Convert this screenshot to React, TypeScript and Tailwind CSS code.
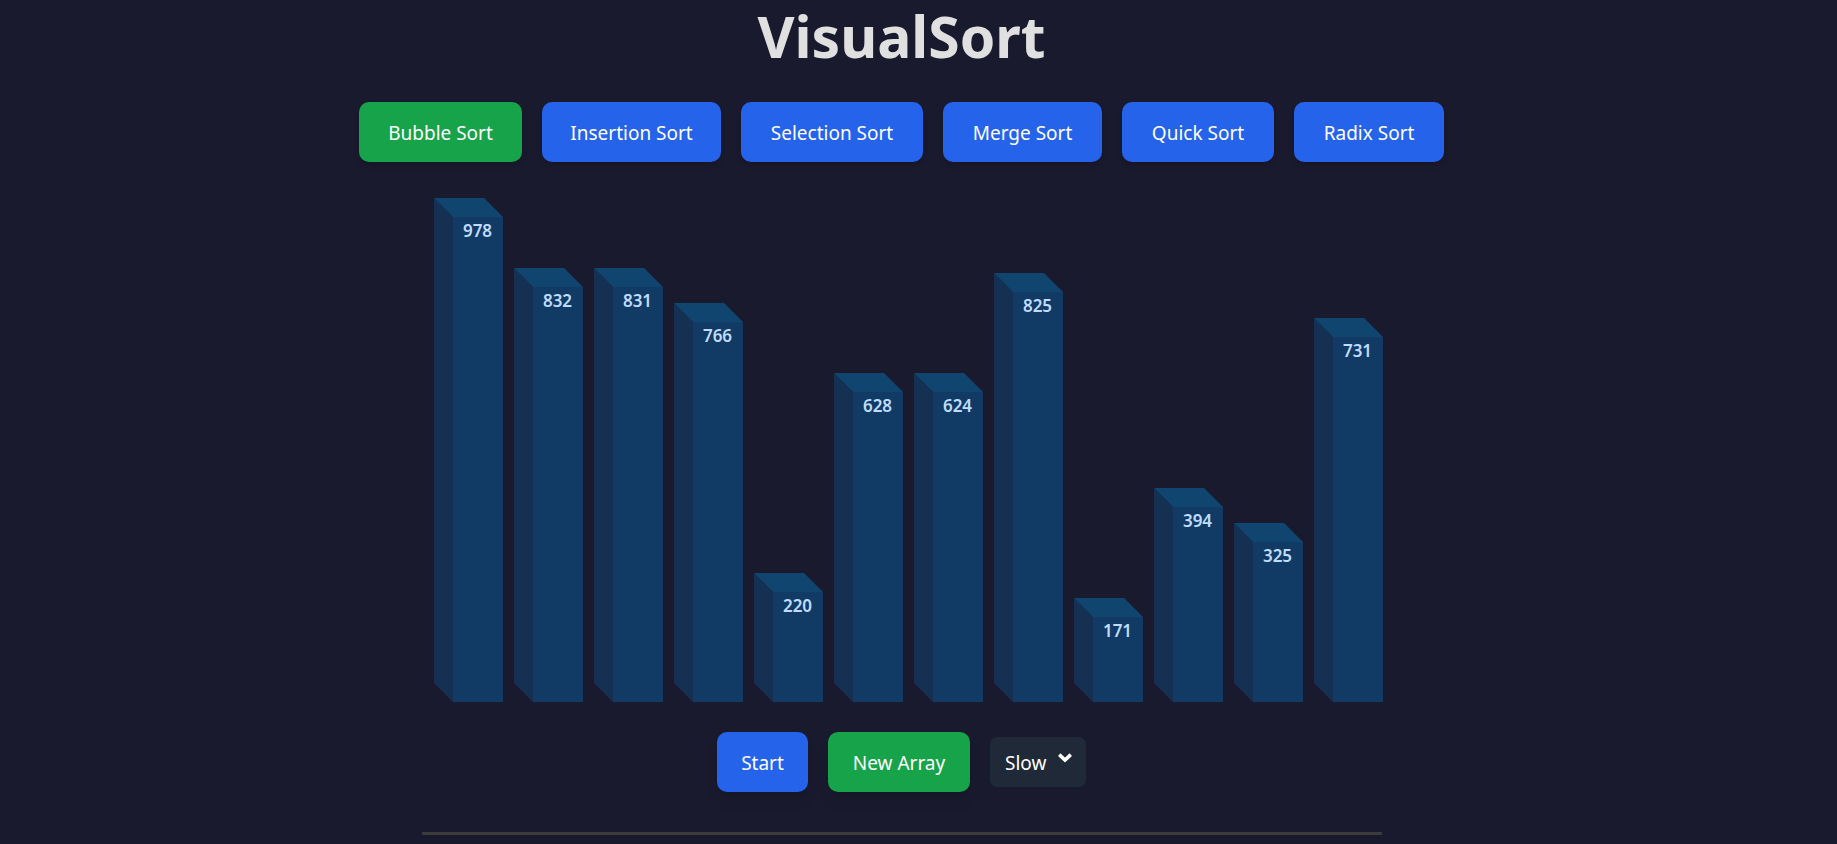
import { useState } from "react";

const algorithms = [
  { name: "Bubble Sort", width: "w-[163px]" },
  { name: "Insertion Sort", width: "w-[179px]" },
  { name: "Selection Sort", width: "w-[182px]" },
  { name: "Merge Sort", width: "w-[159px]" },
  { name: "Quick Sort", width: "w-[152px]" },
  { name: "Radix Sort", width: "w-[150px]" },
];

const initialValues = [978, 832, 831, 766, 220, 628, 624, 825, 171, 394, 325, 731];

const DEPTH = 19;
const FACE = 50;

function Bar({ value }: { value: number }) {
  const height = Math.floor(value / 10) * 5;
  const total = height + DEPTH;
  return (
    <li className="grid">
      <svg
        className="col-start-1 row-start-1 block"
        width={FACE + DEPTH}
        height={total}
        aria-hidden="true"
      >
        <polygon
          className="fill-[#143153]"
          points={`0,0 ${DEPTH},${DEPTH} ${DEPTH},${total} 0,${height}`}
        />
        <polygon
          className="fill-[#0f456f]"
          points={`0,0 ${FACE},0 ${FACE + DEPTH},${DEPTH} ${DEPTH},${DEPTH}`}
        />
        <rect className="fill-[#113a64]" x={DEPTH} y={DEPTH} width={FACE} height={height} />
      </svg>
      <span className="z-10 col-start-1 row-start-1 pt-5 pl-[19px] text-center text-[17px] leading-[26px] font-semibold text-[#bfdbfe]">
        {value}
      </span>
    </li>
  );
}

export default function App() {
  const [active, setActive] = useState("Bubble Sort");
  const [values, setValues] = useState(initialValues);

  const start = () => setValues((v) => [...v].sort((a, b) => a - b));
  const refresh = () => setValues((v) => v.map(() => 100 + Math.floor(Math.random() * 900)));

  return (
    <div className="flex min-h-screen flex-col items-center bg-[#1a1a2e] pr-[34px] font-['Noto_Sans','Open_Sans',sans-serif] text-[19px] text-white">
      <h1 className="text-[57px] leading-[72px] font-bold text-[#e0e0e0]">VisualSort</h1>

      <nav className="mt-[30px] flex flex-wrap justify-center gap-5" aria-label="Algorithms">
        {algorithms.map(({ name, width }) => (
          <button
            key={name}
            type="button"
            onClick={() => setActive(name)}
            className={`h-[60px] rounded-[10px] pt-0.5 whitespace-nowrap shadow-md ${width} ${
              active === name ? "bg-[#16a34a]" : "bg-[#2563eb]"
            }`}
          >
            {name}
          </button>
        ))}
      </nav>

      <main className="flex w-full max-w-[960px] flex-col items-center">
        <ul className="mt-9 flex min-h-[504px] items-end gap-[11px] self-start pl-3">
          {values.map((value, i) => (
            <Bar key={i} value={value} />
          ))}
        </ul>

        <div className="mt-[30px] flex items-center gap-5">
          <button
            type="button"
            onClick={start}
            className="h-[60px] w-[91px] rounded-[10px] bg-[#2563eb] pt-0.5 shadow-lg"
          >
            Start
          </button>
          <button
            type="button"
            onClick={refresh}
            className="h-[60px] w-[142px] rounded-[10px] bg-[#16a34a] pt-0.5 whitespace-nowrap shadow-lg"
          >
            New Array
          </button>
          <div className="grid w-24">
            <select
              aria-label="Speed"
              className="col-start-1 row-start-1 h-[50px] appearance-none rounded-[7px] bg-[#1f2937] pt-0.5 pl-[15px]"
            >
              <option>Slow</option>
              <option>Medium</option>
              <option>Fast</option>
            </select>
            <svg
              className="pointer-events-none z-10 col-start-1 row-start-1 mt-4 mr-[14px] justify-self-end"
              width="14"
              height="10"
              viewBox="0 0 14 10"
              fill="none"
              stroke="currentColor"
              strokeWidth="3.6"
              aria-hidden="true"
            >
              <path d="M1.2 1.6 7 7 12.8 1.6" />
            </svg>
          </div>
        </div>

        <hr className="mt-10 w-full border-0 border-t-[3px] border-[#3b3b3b]" />
      </main>
    </div>
  );
}
